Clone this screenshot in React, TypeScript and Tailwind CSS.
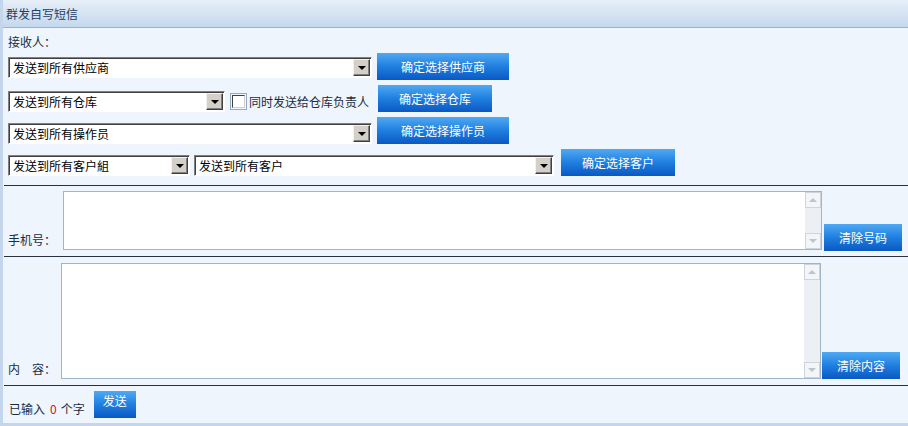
import React from "react";

const font = { fontFamily: '"Noto Sans CJK SC", "Liberation Sans", sans-serif' };

function SelectBox({ text, width }: { text: string; width: string }) {
  return (
    <div
      className={`${width} relative flex h-[21px] items-center border border-t-[#808080] border-l-[#808080] border-b-white border-r-white bg-white shadow-[inset_1px_1px_0_#404040] pl-[4px] text-[12px] text-black`}
    >
      <span className="leading-none">{text}</span>
      <div className="absolute right-[1px] top-[1px] flex h-[17px] w-[17px] items-center justify-center border border-t-[#f4f2ee] border-l-[#f4f2ee] border-b-[#404040] border-r-[#404040] bg-[#d4d0c8] shadow-[inset_-1px_-1px_0_#808080]">
        <div className="h-0 w-0 border-x-[4px] border-t-[4px] border-x-transparent border-t-black" />
      </div>
    </div>
  );
}

function BlueButton({ label, className }: { label: string; className: string }) {
  return (
    <div
      className={`${className} flex h-[27px] items-center justify-center bg-linear-to-b from-[#4fa9f2] via-[#1f7fe0] to-[#0b58c2] text-[12px] text-white`}
    >
      {label}
    </div>
  );
}

function TextBox({ className }: { className: string }) {
  return (
    <div className={`${className} flex border border-[#a3b5c5] bg-white`}>
      <div className="flex-1" />
      <div className="flex w-[16px] flex-col justify-between bg-[#eceff3]">
        <div className="flex h-[16px] items-center justify-center border border-[#cdd4dc] bg-[#f3f5f8]">
          <div className="h-0 w-0 border-x-[4px] border-b-[4px] border-x-transparent border-b-[#bcc4cc]" />
        </div>
        <div className="flex h-[16px] items-center justify-center border border-[#cdd4dc] bg-[#f3f5f8]">
          <div className="h-0 w-0 border-x-[4px] border-t-[4px] border-x-transparent border-t-[#bcc4cc]" />
        </div>
      </div>
    </div>
  );
}

export default function App() {
  return (
    <div
      style={font}
      className="flex h-[426px] w-[908px] flex-col border-l-[3px] border-b-[3px] border-[#c3d6ec] bg-[#eef5fc] text-[12px] text-[#1c2c3c]"
    >
      <div className="flex h-[28px] shrink-0 items-center border-b border-[#9db4cc] bg-linear-to-b from-[#e7eff8] to-[#c4d8ee] pl-[3px] text-[#1d3d63]">
        群发自写短信
      </div>

      <div className="flex flex-col pl-[5px]">
        <div className="flex h-[25px] items-center pt-[2px]">接收人：</div>

        <div className="flex items-end gap-[5px]">
          <div className="mb-[2px]">
            <SelectBox text="发送到所有供应商" width="w-[364px]" />
          </div>
          <BlueButton label="确定选择供应商" className="w-[132px]" />
        </div>

        <div className="mt-[5px] flex items-end">
          <SelectBox text="发送到所有仓库" width="w-[217px]" />
          <div className="ml-[5px] mb-[1px] flex h-[19px] items-center">
            <div className="flex h-[17px] w-[17px] items-center justify-center border border-[#94aac4]">
              <div className="h-[13px] w-[13px] border border-t-[#404040] border-l-[#404040] border-b-[#d4d0c8] border-r-[#d4d0c8] bg-white" />
            </div>
            <span className="ml-[2px]">同时发送给仓库负责人</span>
          </div>
          <BlueButton label="确定选择仓库" className="ml-[9px] w-[114px]" />
        </div>

        <div className="mt-[5px] flex items-end gap-[5px]">
          <SelectBox text="发送到所有操作员" width="w-[364px]" />
          <BlueButton label="确定选择操作员" className="w-[132px]" />
        </div>

        <div className="mt-[5px] flex items-end">
          <SelectBox text="发送到所有客户組" width="w-[182px]" />
          <div className="ml-[4px]">
            <SelectBox text="发送到所有客户" width="w-[360px]" />
          </div>
          <BlueButton label="确定选择客户" className="ml-[7px] w-[114px]" />
        </div>
      </div>

      <div className="mt-[9px] ml-[1px] border-t border-[#28323e]" />

      <div className="flex items-end pt-[5px] pb-[6px] pl-[5px]">
        <div className="w-[55px] pb-[1px]">手机号：</div>
        <TextBox className="h-[59px] w-[759px]" />
        <BlueButton label="清除号码" className="ml-[2px] -mb-[1px] w-[78px]" />
      </div>

      <div className="ml-[1px] border-t border-[#28323e]" />

      <div className="flex items-end pt-[6px] pb-[6px] pl-[5px]">
        <div className="w-[53px] pb-[1px]">内　容：</div>
        <TextBox className="h-[116px] w-[760px]" />
        <BlueButton label="清除内容" className="ml-[1px] w-[78px]" />
      </div>

      <div className="ml-[1px] border-t border-[#28323e]" />

      <div className="flex items-center pl-[6px] pt-[4px]">
        <span className="mt-[10px]">已输入</span>
        <span className="mt-[10px] ml-[5px] text-[#d0101a]">0</span>
        <span className="mt-[10px] ml-[4px]">个字</span>
        <BlueButton label="发送" className="ml-[9px] w-[42px] pb-[6px]" />
      </div>
    </div>
  );
}
